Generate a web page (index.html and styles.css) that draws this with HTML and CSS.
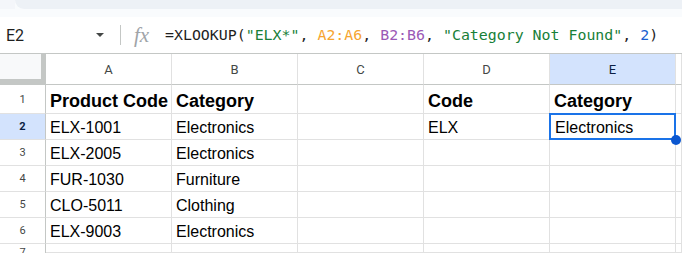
FILE: index.html
```html
<!DOCTYPE html>
<html lang="en">
<head>
    <meta charset="UTF-8">
    <meta name="viewport" content="width=device-width, initial-scale=1.0">
    <title>XLOOKUP wildcard</title>
    <link rel="stylesheet" href="styles.css">
</head>
<body>
    <div class="topbar">
        <div class="topbar-left"></div>
        <div class="topbar-tab"></div>
    </div>

    <div class="formula-bar">
        <div class="name-box">
            <span class="ref">E2</span>
            <span class="caret"></span>
        </div>
        <div class="divider"></div>
        <span class="fx">fx</span>
        <div class="formula">=XLOOKUP(<span class="f-str">"ELX*"</span>, <span class="f-r1">A2:A6</span>, <span class="f-r2">B2:B6</span>, <span class="f-str">"Category Not Found"</span>, <span class="f-num">2</span>)</div>
    </div>

    <div class="sheet">
        <!-- column headers -->
        <div class="corner"></div>
        <div class="col-head">A</div>
        <div class="col-head">B</div>
        <div class="col-head">C</div>
        <div class="col-head">D</div>
        <div class="col-head selected">E</div>
        <div class="col-head"></div>

        <!-- row 1 -->
        <div class="row-head">1</div>
        <div class="cell bold">Product Code</div>
        <div class="cell bold">Category</div>
        <div class="cell"></div>
        <div class="cell bold">Code</div>
        <div class="cell bold">Category</div>
        <div class="cell"></div>

        <!-- row 2 -->
        <div class="row-head selected">2</div>
        <div class="cell">ELX-1001</div>
        <div class="cell">Electronics</div>
        <div class="cell"></div>
        <div class="cell">ELX</div>
        <div class="cell active">Electronics<span class="handle"></span></div>
        <div class="cell"></div>

        <!-- row 3 -->
        <div class="row-head">3</div>
        <div class="cell">ELX-2005</div>
        <div class="cell">Electronics</div>
        <div class="cell"></div>
        <div class="cell"></div>
        <div class="cell"></div>
        <div class="cell"></div>

        <!-- row 4 -->
        <div class="row-head">4</div>
        <div class="cell">FUR-1030</div>
        <div class="cell">Furniture</div>
        <div class="cell"></div>
        <div class="cell"></div>
        <div class="cell"></div>
        <div class="cell"></div>

        <!-- row 5 -->
        <div class="row-head">5</div>
        <div class="cell">CLO-5011</div>
        <div class="cell">Clothing</div>
        <div class="cell"></div>
        <div class="cell"></div>
        <div class="cell"></div>
        <div class="cell"></div>

        <!-- row 6 -->
        <div class="row-head">6</div>
        <div class="cell">ELX-9003</div>
        <div class="cell">Electronics</div>
        <div class="cell"></div>
        <div class="cell"></div>
        <div class="cell"></div>
        <div class="cell"></div>

        <!-- row 7, only its top shows -->
        <div class="row-head last">7</div>
        <div class="cell"></div>
        <div class="cell"></div>
        <div class="cell"></div>
        <div class="cell"></div>
        <div class="cell"></div>
        <div class="cell"></div>
    </div>
</body>
</html>
```

FILE: styles.css
```css
body {
    margin: 0;
    background: #ffffff;
    font-family: 'Liberation Sans', Arial, sans-serif;
    overflow: hidden;
    width: 682px;
    height: 253px;
}

/* top strip of the window */
.topbar {
    display: flex;
    height: 17px;
    background-color: #f9fbfd;
}

.topbar-left {
    width: 15px;
    height: 9px;
    background-color: #f4f6fa;
}

.topbar-tab {
    flex: 1;
    height: 9px;
    background-color: #edf1f6;
    border-bottom-left-radius: 12px;
}

/* formula bar */
.formula-bar {
    display: flex;
    align-items: center;
    height: 36px;
    border-bottom: 1px solid #c4c7c5;
}

.name-box {
    display: flex;
    align-items: center;
    width: 112px;
    padding-left: 6px;
    box-sizing: border-box;
}

.ref {
    font-family: Roboto, sans-serif;
    font-size: 16px;
    color: #1f1f1f;
    flex: 1;
}

.caret {
    width: 0;
    height: 0;
    margin-right: 8px;
    border-left: 4px solid transparent;
    border-right: 4px solid transparent;
    border-top: 4px solid #444746;
}

.divider {
    width: 1px;
    height: 20px;
    margin-left: 8px;
    background-color: #c4c7c5;
}

.fx {
    margin-left: 13px;
    width: 31px;
    font-family: 'Liberation Serif', serif;
    font-style: italic;
    font-size: 21px;
    line-height: 20px;
    color: #a0a4a8;
    letter-spacing: 0;
}

.formula {
    font-family: 'DejaVu Sans Mono', monospace;
    font-size: 14.9px;
    color: #1f1f1f;
    white-space: pre;
}

.f-str { color: #188038; }
.f-r1 { color: #f6a530; }
.f-r2 { color: #9b59b6; }
.f-num { color: #1a5fd0; }

/* grid */
.sheet {
    display: grid;
    grid-template-columns: 46px repeat(5, 126px) 1fr;
    grid-template-rows: 31px 29px repeat(5, 26px) 9px;
    overflow: hidden;
}

.sheet > div {
    box-sizing: border-box;
    border-right: 1px solid #e1e1e1;
    border-bottom: 1px solid #e1e1e1;
}

.corner {
    background-color: #f8f9fa;
    border-right: 5px solid #c4c7c5 !important;
    border-bottom: 6px solid #c4c7c5 !important;
}

.col-head {
    display: flex;
    align-items: center;
    justify-content: center;
    font-family: Roboto, sans-serif;
    font-size: 13px;
    color: #444746;
    border-bottom-color: #c4c7c5 !important;
}

.row-head {
    display: flex;
    align-items: center;
    justify-content: center;
    font-family: Roboto, sans-serif;
    font-size: 11px;
    color: #444746;
    border-right-color: #c4c7c5 !important;
}

.row-head.last {
    align-items: flex-start;
    padding-top: 5px;
    line-height: 8px;
    overflow: hidden;
    border-bottom: none;
}

.col-head.selected {
    background-color: #d3e3fd;
    color: #0b1f44;
}

.row-head.selected {
    background-color: #d3e3fd;
    color: #0b1f44;
    font-weight: bold;
}

.cell {
    display: flex;
    align-items: flex-end;
    padding: 0 0 1px 4px;
    font-size: 16px;
    line-height: 20px;
    color: #000000;
    white-space: nowrap;
    overflow: hidden;
}

.cell.bold {
    font-weight: bold;
    font-size: 18px;
    line-height: 22px;
}

.cell.active {
    position: relative;
    overflow: visible;
    padding-left: 5px;
}

.cell.active::after {
    content: "";
    position: absolute;
    left: -1px;
    top: -1px;
    right: -1px;
    bottom: -1px;
    border: 2px solid #1a73e8;
}

.handle {
    position: absolute;
    right: -6px;
    bottom: -6px;
    width: 10px;
    height: 10px;
    border-radius: 50%;
    background-color: #0b57d0;
    z-index: 2;
}
```
